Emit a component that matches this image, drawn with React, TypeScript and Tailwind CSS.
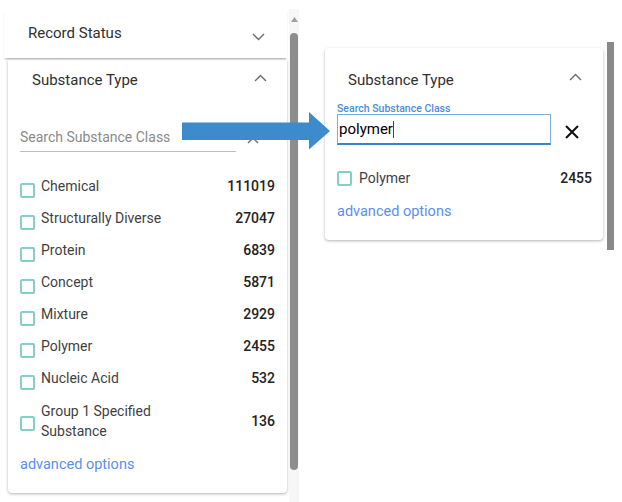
import React from "react";

const ChevronDown = () => (
  <svg width="13" height="8" viewBox="0 0 13 8" fill="none">
    <polyline points="1,1 6.5,6.5 12,1" stroke="#6b6b6b" strokeWidth="1.4" />
  </svg>
);
const ChevronUp = () => (
  <svg width="13" height="8" viewBox="0 0 13 8" fill="none">
    <polyline points="1,7 6.5,1.5 12,7" stroke="#6b6b6b" strokeWidth="1.4" />
  </svg>
);

const Box = ({ cls = "" }: { cls?: string }) => (
  <span className={`inline-block w-[15px] h-[15px] border-2 border-[#86cfc6] rounded-[2px] shrink-0 ${cls}`} />
);

const items: [string, string][] = [
  ["Chemical", "111019"],
  ["Structurally Diverse", "27047"],
  ["Protein", "6839"],
  ["Concept", "5871"],
  ["Mixture", "2929"],
  ["Polymer", "2455"],
  ["Nucleic Acid", "532"],
];

export default function App() {
  return (
    <div className="relative w-[622px] h-[502px] bg-white flex overflow-hidden font-['Roboto','Liberation_Sans',sans-serif]">
      {/* Left panel */}
      <div className="flex pt-[9px] pl-[4px]">
        <div className="w-[283px] flex flex-col">
          <div className="relative z-10 h-[49px] flex items-center justify-between pl-[24px] pr-[22px] bg-white shadow-[0_2px_2px_-1px_rgba(0,0,0,0.35)]">
            <span className="text-[15px] text-[#303030]">Record Status</span>
            <span className="mt-[6px]"><ChevronDown /></span>
          </div>
          <div className="ml-[4px] mt-[2px] w-[279px] h-[433px] bg-white rounded-b-[4px] shadow-[0_1px_3px_rgba(0,0,0,0.3)] flex flex-col">
            <div className="h-[40px] flex items-center justify-between pl-[24px] pr-[20px]">
              <span className="text-[15px] text-[#303030]">Substance Type</span>
              <span className="-mt-[4px]"><ChevronUp /></span>
            </div>
            <div className="pl-[12px] mt-[25px] flex items-center">
              <div className="w-[216px] h-[27px] flex items-center pb-[2px] border-b border-[#bdbdbd] text-[14px] text-[#8a8a8a]">
                Search Substance Class
              </div>
              <svg className="ml-[11px] -mt-[2px]" width="12" height="12" viewBox="0 0 12 12">
                <path d="M1 1 L11 11 M11 1 L1 11" stroke="#777" strokeWidth="1.5" />
              </svg>
            </div>
            <div className="mt-[18px] flex flex-col">
              {items.map(([name, n]) => (
                <div key={name} className="h-[32px] flex items-center pl-[12px] pr-[12px]">
                  <Box cls="mt-[8px]" />
                  <span className="ml-[6px] flex-1 text-[14px] text-[#3f3f3f]">{name}</span>
                  <span className="text-[14px] font-medium text-[#222]">{n}</span>
                </div>
              ))}
              <div className="h-[54px] flex items-center pl-[12px] pr-[12px]">
                <Box cls="mt-[4px]" />
                <span className="ml-[6px] w-[150px] text-[14px] leading-[20px] text-[#3f3f3f]">
                  Group 1 Specified Substance
                </span>
                <span className="flex-1" />
                <span className="text-[14px] font-medium text-[#222]">136</span>
              </div>
            </div>
            <div className="pl-[12px] mt-[7px] text-[14.5px] leading-[20px] text-[#5a8ff0]">advanced options</div>
          </div>
        </div>
        <div className="ml-[2px] w-[10px] h-[493px] bg-[#f7f7f7] flex flex-col items-center pt-[8px]">
          <svg width="7" height="5" viewBox="0 0 7 5">
            <polygon points="3.5,0 7,5 0,5" fill="#a0a0a0" />
          </svg>
          <div className="mt-[11px] w-[8px] h-[437px] rounded-full bg-[#8d8d8d]" />
        </div>
      </div>

      {/* Right panel */}
      <div className="ml-[26px] flex items-start">
        <div className="mt-[48px] w-[278px] h-[192px] bg-white rounded-[4px] shadow-[0_1px_3px_rgba(0,0,0,0.3)] flex flex-col">
          <div className="pt-[22px] h-[42px] flex items-center justify-between pl-[23px] pr-[21px]">
            <span className="text-[15px] leading-[20px] text-[#303030]">Substance Type</span>
            <span className="-mt-[6px]"><ChevronUp /></span>
          </div>
          <div className="pl-[12px] mt-[14px] flex items-center">
            <div className="flex flex-col">
              <span className="text-[10.5px] leading-[10px] font-medium text-[#4a8ed6]">Search Substance Class</span>
              <div className="w-[214px] h-[31px] border border-[#79aee0] border-b-2 border-b-[#3b82cc] flex items-center pl-[1px]">
                <span className="text-[15px] text-black">polymer</span>
                <span className="w-[1px] h-[17px] bg-[#444]" />
              </div>
            </div>
            <svg className="ml-[14px] mt-[14px]" width="14" height="14" viewBox="0 0 14 14">
              <path d="M1 1 L13 13 M13 1 L1 13" stroke="#111" strokeWidth="2.1" />
            </svg>
          </div>
          <div className="mt-[17px] h-[32px] flex items-center pl-[12px] pr-[11px]">
            <Box />
            <span className="ml-[7px] flex-1 text-[14px] text-[#3f3f3f]">Polymer</span>
            <span className="text-[14px] font-medium text-[#222]">2455</span>
          </div>
          <div className="pl-[12px] mt-[8px] text-[14.5px] leading-[20px] text-[#5a8ff0]">advanced options</div>
        </div>
        <div className="ml-[4px] mt-[42px] w-[7px] h-[208px] bg-[#8a8a8a]" />
      </div>

      {/* Overlay arrow */}
      <svg className="absolute left-0 top-0 pointer-events-none" width="622" height="502" viewBox="0 0 622 502">
        <polygon points="182,122.5 309,122.5 309,112 330,131 309,149.5 309,140 182,140" fill="#3d8bcd" />
      </svg>
    </div>
  );
}
